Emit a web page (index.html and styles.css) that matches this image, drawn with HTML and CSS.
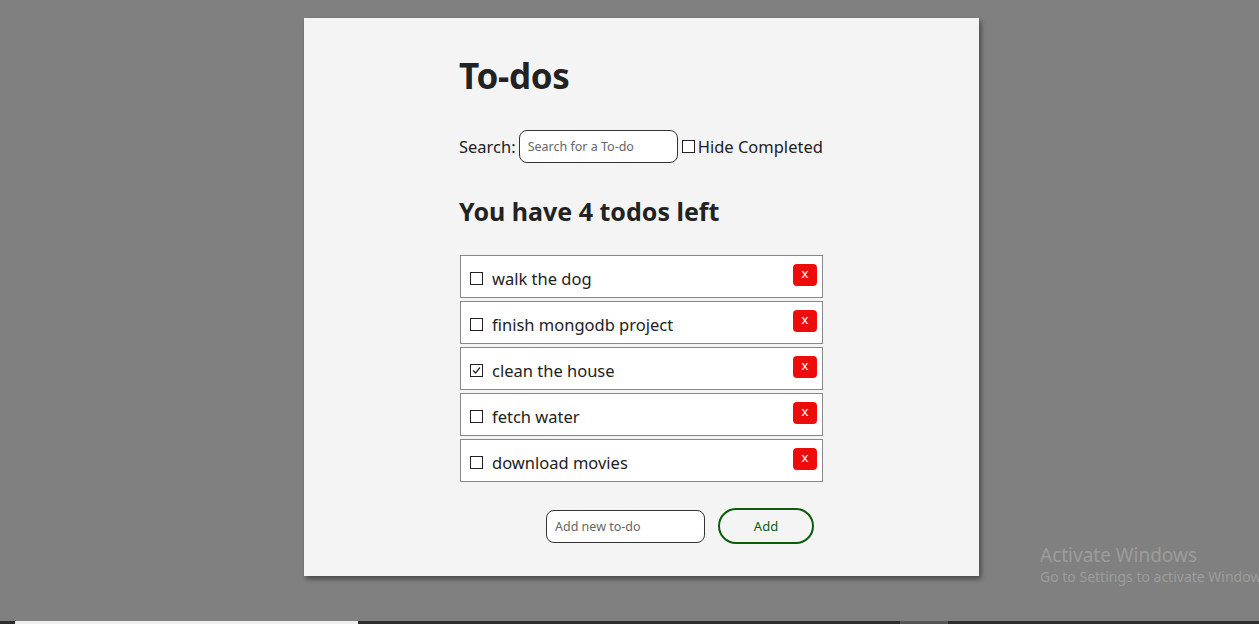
FILE: index.html
```html
<!DOCTYPE html>
<html>
<head>
<meta charset="utf-8">
<link rel="stylesheet" href="styles.css">
</head>
<body>
<div class="screen">
  <div class="card">
    <div class="content">
      <h1 class="title">To-dos</h1>
      <div class="search-row">
        <label class="search-label">Search:</label>
        <input class="text-input" type="text" placeholder="Search for a To-do">
        <span class="box"></span><span class="hide-label">Hide Completed</span>
      </div>
      <h2 class="count">You have 4 todos left</h2>
      <ul class="todos">
        <li class="todo"><span class="box"></span><span class="todo-text">walk the dog</span><button class="del">x</button></li>
        <li class="todo"><span class="box"></span><span class="todo-text">finish mongodb project</span><button class="del">x</button></li>
        <li class="todo"><span class="box checked"><svg width="11" height="11" viewBox="0 0 11 11"><path d="M2 5.5 L4.5 8 L9 2.5" fill="none" stroke="#222" stroke-width="1.2"/></svg></span><span class="todo-text">clean the house</span><button class="del">x</button></li>
        <li class="todo"><span class="box"></span><span class="todo-text">fetch water</span><button class="del">x</button></li>
        <li class="todo"><span class="box"></span><span class="todo-text">download movies</span><button class="del">x</button></li>
      </ul>
      <div class="add-row">
        <input class="text-input" type="text" placeholder="Add new to-do">
        <button class="add-btn">Add</button>
      </div>
    </div>
  </div>
  <div class="activate">
    <div class="act-title">Activate Windows</div>
    <div class="act-sub">Go to Settings to activate Window</div>
  </div>
</div>
<div class="taskbar">
  <span class="tb-seg tb-light"></span>
  <span class="tb-gap"></span>
  <span class="tb-seg tb-mid"></span>
</div>
</body>
</html>
```

FILE: styles.css
```css
* { box-sizing: border-box; }
html, body { margin: 0; padding: 0; }
body {
  width: 1259px;
  height: 624px;
  overflow: hidden;
  background: #808080;
  font-family: "Noto Sans", "Open Sans", sans-serif;
  color: #222;
}
.screen {
  position: relative;
  height: 621px;
  padding: 18px 0 0 304px;
}
.card {
  width: 675px;
  height: 558px;
  background: #f4f4f4;
  box-shadow: 2px 3px 5px rgba(0,0,0,0.45);
  padding: 0 0 0 155px;
}
.content {
  width: 420px;
  padding-top: 36px;
}
.title {
  margin: 0;
  font-size: 35px;
  font-weight: 700;
  line-height: 44px;
  letter-spacing: -0.3px;
}
.search-row {
  display: flex;
  align-items: center;
  margin-top: 31px;
  font-size: 16.5px;
  height: 34px;
  white-space: nowrap;
}
.search-label { margin-right: 3px; }
.text-input {
  width: 159px;
  height: 33px;
  border: 1px solid #333;
  border-radius: 8px;
  background: #fff;
  padding: 0 8px;
  font-family: "Noto Sans", sans-serif;
  font-size: 12.5px;
  outline: none;
}
.text-input::placeholder { color: #666; }
.search-row .box { margin-left: 4px; margin-right: 3px; }
.box {
  display: inline-flex;
  align-items: center;
  justify-content: center;
  width: 13px;
  height: 13px;
  border: 1px solid #222;
  background: #fff;
  flex: none;
}
.count {
  margin: 33px 0 0;
  font-size: 25px;
  font-weight: 700;
  line-height: 30px;
}
.todos {
  list-style: none;
  margin: 29px 0 0 1px;
  padding: 0;
  width: 363px;
  display: flex;
  flex-direction: column;
  gap: 3px;
}
.todo {
  display: flex;
  align-items: center;
  height: 43px;
  border: 1px solid #888;
  background: #fff;
  padding: 4px 5px 0 9px;
  font-size: 16.5px;
}
.todo .box { margin-right: 9px; }
.todo-text { flex: 1; }
.del {
  align-self: flex-start;
  margin-top: 4px;
  width: 24px;
  height: 22px;
  border: none;
  border-radius: 4px;
  background: #ee0b0b;
  color: #fff;
  font-family: "Noto Sans", sans-serif;
  font-size: 13px;
  padding: 0 0 3px;
  line-height: 1;
}
.add-row {
  display: flex;
  align-items: center;
  gap: 13px;
  margin: 26px 0 0 87px;
}
.add-btn {
  width: 96px;
  height: 36px;
  border: 2px solid #0a5c0a;
  border-radius: 18px;
  background: transparent;
  color: #0a5c0a;
  font-family: "Noto Sans", sans-serif;
  font-size: 13px;
}
.activate {
  position: absolute;
  left: 1040px;
  top: 543px;
  color: #9c9c9c;
  white-space: nowrap;
}
.act-title { font-size: 19px; line-height: 24px; }
.act-sub { font-size: 14px; line-height: 20px; }
.taskbar {
  display: flex;
  height: 3px;
  background: #2e2e2e;
}
.tb-seg { display: block; height: 3px; }
.tb-light { margin-left: 15px; width: 343px; background: #f0f0f0; }
.tb-gap { width: 542px; }
.tb-mid { width: 48px; background: #555; }
```
